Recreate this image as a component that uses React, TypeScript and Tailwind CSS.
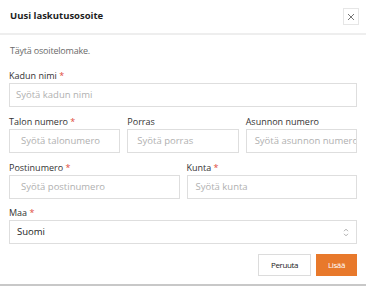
import React from "react";

const font = { fontFamily: '"Open Sans", "Noto Sans", sans-serif' };

function Label({ text, req }: { text: string; req?: boolean }) {
  return (
    <div className="h-[14px] leading-[14px] text-[9px] text-[#333]">
      {text}
      {req && <span className="text-[#e04a3c]"> *</span>}
    </div>
  );
}

function Input({ ph, pad }: { ph: string; pad: string }) {
  return (
    <div className={`h-[24px] border border-[#dedede] bg-white pr-[5px] flex items-center overflow-hidden whitespace-nowrap text-[9.5px] text-[#b0b0b0] ${pad}`}>
      {ph}
    </div>
  );
}

function Field({ label, req, ph, pad }: { label: string; req?: boolean; ph: string; pad: string }) {
  return (
    <div className="flex flex-col min-w-0">
      <Label text={label} req={req} />
      <Input ph={ph} pad={pad} />
    </div>
  );
}

export default function App() {
  return (
    <div style={font} className="w-[366px] h-[286px] bg-white border-b-[2px] border-[#c8c8c8] flex flex-col overflow-hidden">
      <div className="h-[35px] border-b-[2px] border-[#eeeeee] flex items-center justify-between pl-[10px] pr-[7px]">
        <div className="text-[9.5px] font-bold text-[#1e1e1e]">Uusi laskutusosoite</div>
        <div className="w-[16px] h-[17px] border border-[#e6e6e6] flex items-center justify-center">
          <svg width="8" height="8" viewBox="0 0 8 8" fill="none" stroke="#666" strokeWidth="0.9">
            <path d="M1 1L7 7M7 1L1 7" />
          </svg>
        </div>
      </div>
      <div className="px-[9px] pt-[9px] flex flex-col">
        <div className="h-[14px] leading-[14px] text-[9px] tracking-[-0.2px] text-[#6a6a6a] pl-[1px]">Täytä osoitelomake.</div>
        <div className="mt-[11px]">
          <Field label="Kadun nimi" req ph="Syötä kadun nimi" pad="pl-[6px]" />
        </div>
        <div className="mt-[8px] grid grid-cols-3 gap-[7px]">
          <Field label="Talon numero" req ph="Syötä talonumero" pad="pl-[11px]" />
          <Field label="Porras" ph="Syötä porras" pad="pl-[9px]" />
          <Field label="Asunnon numero" ph="Syötä asunnon numero" pad="pl-[8px]" />
        </div>
        <div className="mt-[8px] grid grid-cols-2 gap-[7px]">
          <Field label="Postinumero" req ph="Syötä postinumero" pad="pl-[11px]" />
          <Field label="Kunta" req ph="Syötä kunta" pad="pl-[8px]" />
        </div>
        <div className="mt-[7px] flex flex-col">
          <Label text="Maa" req />
          <div className="h-[24px] border border-[#dedede] bg-white pl-[7px] pr-[7px] flex items-center justify-between text-[9.5px] text-[#222]">
            <span>Suomi</span>
            <svg width="6" height="9" viewBox="0 0 6 9" fill="none" stroke="#999" strokeWidth="0.8">
              <path d="M1 3.2L3 1.2L5 3.2M1 5.8L3 7.8L5 5.8" />
            </svg>
          </div>
        </div>
        <div className="mt-[10px] flex justify-end gap-[5px]">
          <div className="h-[22px] w-[53px] border border-[#dcdcdc] bg-white flex items-center justify-center text-[8px] font-medium tracking-[-0.4px] text-[#222]">
            Peruuta
          </div>
          <div className="h-[22px] w-[41px] bg-[#e8792b] flex items-center justify-center text-[8px] font-medium tracking-[-0.4px] text-white">
            Lisää
          </div>
        </div>
      </div>
    </div>
  );
}
